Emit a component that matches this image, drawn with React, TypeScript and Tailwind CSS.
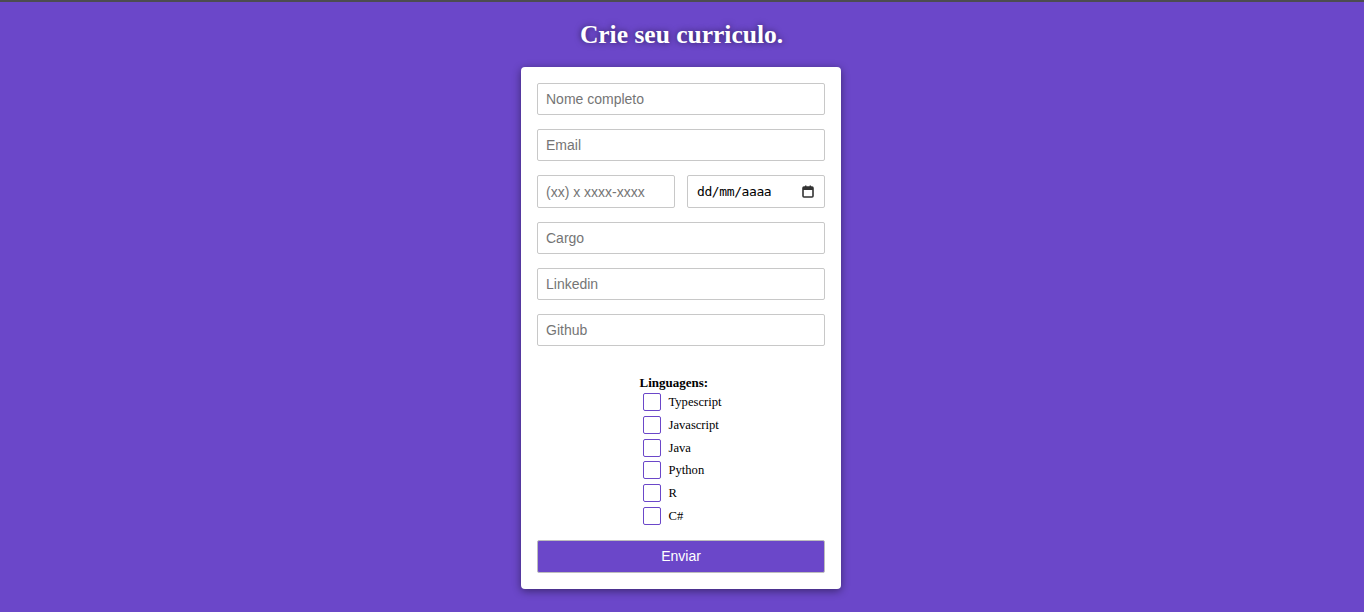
import { useState } from "react";

const langs = ["Typescript", "Javascript", "Java", "Python", "R", "C#"];

const inputCls =
  "w-full h-[32px] border border-[#c8c8c8] rounded-[2px] px-2 text-[14px] text-black placeholder:text-[#757575] outline-none bg-white";

export default function App() {
  const [checked, setChecked] = useState<string[]>([]);

  const toggle = (l: string) =>
    setChecked((prev) => (prev.includes(l) ? prev.filter((x) => x !== l) : [...prev, l]));

  return (
    <div className="min-h-[612px] bg-[#6b47c9] font-['Liberation_Sans',Arial,sans-serif]">
      <div className="h-[2px] bg-[#4c4c50]" />
      <h1 className="pt-[18px] pr-[1px] text-center text-[25.5px] leading-[30px] font-bold text-white font-['Liberation_Serif','Times_New_Roman',serif] [text-shadow:0_0_6px_rgba(0,0,0,0.55)]">
        Crie seu curriculo.
      </h1>
      <div className="mt-[17px] flex justify-center pr-[2px]">
        <div className="w-[320px] rounded-[4px] bg-white p-4 shadow-[0_2px_8px_rgba(0,0,0,0.45)]">
          <div className="flex flex-col gap-[14px]">
            <input className={inputCls} placeholder="Nome completo" />
            <input className={inputCls} placeholder="Email" />
            <div className="flex gap-[12px]">
              <input
                className="w-[138px] h-[33px] border border-[#c8c8c8] rounded-[2px] px-2 text-[14px] placeholder:text-[#757575] outline-none"
                placeholder="(xx) x xxxx-xxxx"
              />
              <div className="w-[138px] h-[33px] border border-[#c8c8c8] rounded-[2px] pl-[9px] pr-[10px] flex items-center justify-between">
                <span className="pt-[1px] text-[13px] text-black font-['DejaVu_Sans_Mono','Liberation_Mono',monospace] tracking-[-0.4px]">
                  dd/mm/aaaa
                </span>
                <svg width="12" height="13" viewBox="0 0 12 13" fill="none">
                  <rect x="1" y="2" width="10" height="10" rx="1" stroke="#333" strokeWidth="1.6" />
                  <rect x="1" y="2" width="10" height="3" fill="#333" />
                  <rect x="3" y="0.5" width="1.4" height="2.5" fill="#333" />
                  <rect x="7.6" y="0.5" width="1.4" height="2.5" fill="#333" />
                </svg>
              </div>
            </div>
            <input className={inputCls} placeholder="Cargo" />
            <input className={inputCls} placeholder="Linkedin" />
            <input className={inputCls} placeholder="Github" />
          </div>

          <div className="mt-[29px] flex justify-center pl-[2px]">
            <div className="flex flex-col items-start font-['Liberation_Serif','Times_New_Roman',serif] text-black">
              <div className="text-[13px] font-bold leading-[16px] -ml-[4px] pl-[1px]">Linguagens:</div>
              <div className="flex flex-col">
                {langs.map((l) => (
                  <label key={l} className="flex h-[22.67px] items-center gap-[8px] cursor-pointer">
                    <span
                      onClick={() => toggle(l)}
                      className={`w-[18px] h-[18px] rounded-[2px] border border-[#6b47c9] ${
                        checked.includes(l) ? "bg-[#6b47c9]" : "bg-white"
                      }`}
                    />
                    <span className="text-[12.6px] leading-[14px]">{l}</span>
                  </label>
                ))}
              </div>
            </div>
          </div>

          <button className="mt-[13px] w-full h-[33px] rounded-[2px] border border-[#bdbdbd] bg-[#6b47c9] text-[14px] text-white">
            Enviar
          </button>
        </div>
      </div>
    </div>
  );
}
